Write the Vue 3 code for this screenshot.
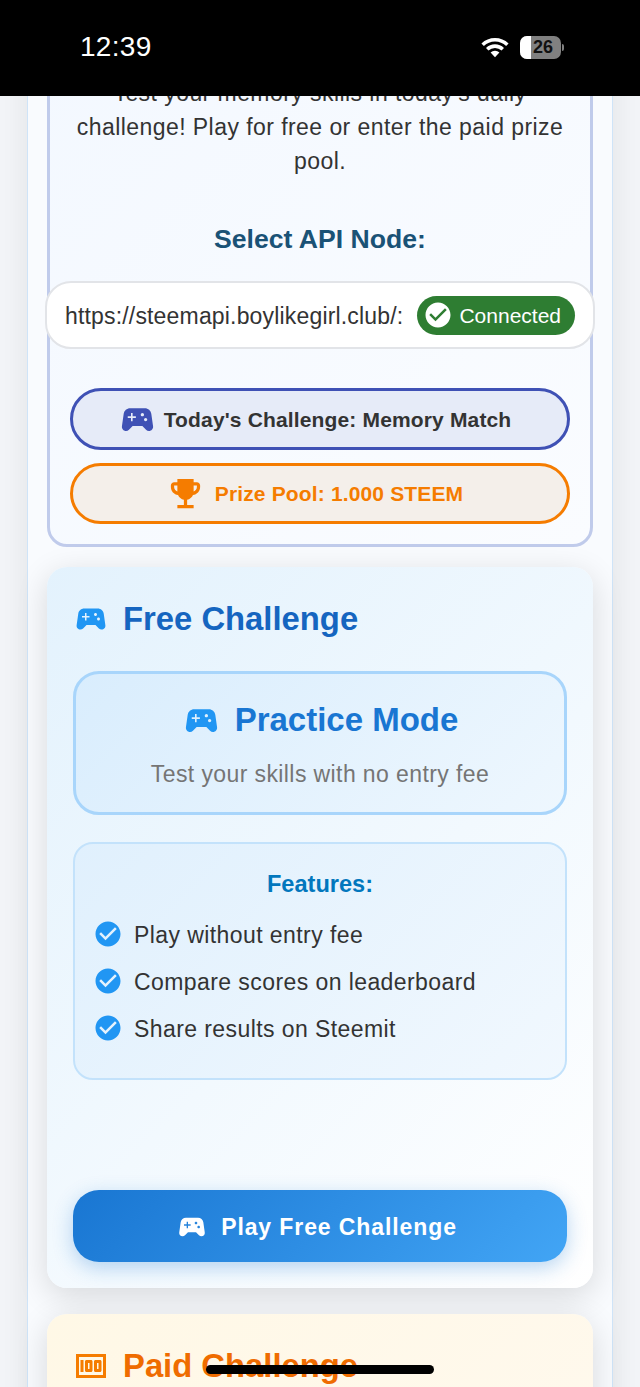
<template>
  <div class="phone">
    <div class="status-bar">
      <span class="time">12:39</span>
      <div class="status-icons">
        <svg class="wifi" viewBox="0 0 34 26">
          <path d="M3 10.5a20 20 0 0 1 28 0" />
          <path d="M8.2 15.6a12.6 12.6 0 0 1 17.6 0" />
          <path d="M17 24.5l-5-5.2a7 7 0 0 1 10 0z" class="wifi-dot" />
        </svg>
        <div class="battery">
          <div class="battery-fill"></div>
          <span>26</span>
        </div>
        <div class="battery-tip"></div>
      </div>
    </div>

    <div class="shell">
      <section class="intro">
        <p class="intro-text">Test your memory skills in today's daily challenge! Play for free or enter the paid prize pool.</p>
        <h3 class="node-title">Select API Node:</h3>
        <div class="node-select">
          <span class="node-url">https://steemapi.boylikegirl.club/:</span>
          <span class="node-status">
            <svg viewBox="0 0 24 24"><path :d="checkPath" /></svg>
            <span class="node-label">Connected</span>
          </span>
        </div>
        <div class="chip chip-blue">
          <svg viewBox="0 0 24 24"><path :d="padPath" /></svg>
          <span>Today's Challenge: Memory Match</span>
        </div>
        <div class="chip chip-orange">
          <svg viewBox="0 0 24 24"><path :d="trophyPath" /></svg>
          <span>Prize Pool: 1.000 STEEM</span>
        </div>
      </section>

      <section class="card card-free">
        <h2 class="card-title">
          <svg viewBox="0 0 24 24"><path :d="padPath" /></svg>
          Free Challenge
        </h2>
        <div class="mode">
          <h3>
            <svg viewBox="0 0 24 24"><path :d="padPath" /></svg>
            Practice Mode
          </h3>
          <p>Test your skills with no entry fee</p>
        </div>
        <div class="features">
          <h4>Features:</h4>
          <ul>
            <li v-for="item in features" :key="item">
              <svg viewBox="0 0 24 24"><path :d="checkPath" /></svg>
              {{ item }}
            </li>
          </ul>
        </div>
        <button class="play">
          <svg viewBox="0 0 24 24"><path :d="padPath" /></svg>
          Play Free Challenge
        </button>
      </section>

      <section class="card card-paid">
        <h2 class="card-title">
          <svg viewBox="0 0 24 24"><path :d="moneyPath" /></svg>
          Paid Challenge
        </h2>
      </section>
    </div>

    <div class="home-bar"></div>
  </div>
</template>

<script setup>
const features = ['Play without entry fee', 'Compare scores on leaderboard', 'Share results on Steemit']

const padPath = 'M21.58 16.09l-1.09-7.66C20.21 6.46 18.52 5 16.53 5H7.47C5.48 5 3.79 6.46 3.51 8.43l-1.09 7.66C2.2 17.63 3.39 19 4.94 19c.68 0 1.32-.27 1.8-.75L9 16h6l2.25 2.25c.48.48 1.13.75 1.8.75 1.56 0 2.75-1.37 2.53-2.91zM11 11H9v2H8v-2H6v-1h2V8h1v2h2v1zm4-1c-.55 0-1-.45-1-1s.45-1 1-1 1 .45 1 1-.45 1-1 1zm2 3c-.55 0-1-.45-1-1s.45-1 1-1 1 .45 1 1-.45 1-1 1z'
const checkPath = 'M12 2C6.48 2 2 6.48 2 12s4.48 10 10 10 10-4.48 10-10S17.52 2 12 2zm-2 15l-5-5 1.41-1.41L10 14.17l7.59-7.59L19 8l-9 9z'
const trophyPath = 'M19 5h-2V3H7v2H5c-1.1 0-2 .9-2 2v1c0 2.55 1.92 4.63 4.39 4.94.63 1.5 1.98 2.63 3.61 2.96V19H7v2h10v-2h-4v-3.1c1.63-.33 2.98-1.46 3.61-2.96C19.08 12.63 21 10.55 21 8V7c0-1.1-.9-2-2-2zM5 8V7h2v3.82C5.84 10.4 5 9.3 5 8zm14 0c0 1.3-.84 2.4-2 2.82V7h2v1z'
const moneyPath = 'M5 8h2v8H5zm7 0H9c-.55 0-1 .45-1 1v6c0 .55.45 1 1 1h3c.55 0 1-.45 1-1V9c0-.55-.45-1-1-1zm-1 6h-1v-4h1v4zm7-6h-3c-.55 0-1 .45-1 1v6c0 .55.45 1 1 1h3c.55 0 1-.45 1-1V9c0-.55-.45-1-1-1zm-1 6h-1v-4h1v4zM2 4v16h20V4H2zm2 14V6h16v12H4z'
</script>

<style scoped>
.phone {
  position: relative;
  width: 640px;
  height: 1387px;
  overflow: hidden;
  background: #f3f5f8;
  font-family: "Liberation Sans", Arial, sans-serif;
  color: #333;
}

.status-bar {
  position: absolute;
  top: 0;
  left: 0;
  right: 0;
  z-index: 5;
  height: 96px;
  background: #000;
  display: flex;
  justify-content: space-between;
  align-items: center;
  padding: 0 76px 2px 80px;
  box-sizing: border-box;
}

.time {
  color: #fff;
  font-size: 28px;
  font-weight: 500;
  letter-spacing: 0.3px;
}

.status-icons {
  display: flex;
  align-items: center;
}

.wifi {
  width: 30px;
  height: 24px;
  margin-right: 10px;
}

.wifi path {
  fill: none;
  stroke: #fff;
  stroke-width: 4px;
}

.wifi .wifi-dot {
  fill: #fff;
  stroke: none;
}

.battery {
  position: relative;
  width: 41px;
  height: 23px;
  border-radius: 7px;
  background: #808080;
  overflow: hidden;
  display: flex;
  align-items: center;
  justify-content: center;
  padding-left: 5px;
  box-sizing: border-box;
}

.battery-fill {
  position: absolute;
  left: 0;
  top: 0;
  bottom: 0;
  width: 11px;
  background: #fff;
}

.battery span {
  position: relative;
  color: #111;
  font-size: 18px;
  font-weight: 700;
}

.battery-tip {
  width: 2px;
  height: 7px;
  margin-left: 1px;
  background: #808080;
  border-radius: 0 2px 2px 0;
}

.shell {
  width: 586px;
  margin: -24px 0 0 27px;
  padding: 20px 19px 60px;
  box-sizing: border-box;
  background: #f9fbfe;
  border: 1px solid #cfe4f8;
  box-shadow: 0 0 32px rgba(0, 0, 0, 0.08);
  min-height: 1500px;
}

.intro {
  padding: 76px 20px 20px;
  border: 3px solid #c0cbeb;
  border-radius: 20px;
  background: linear-gradient(135deg, #f3f8ff, #fafcff);
  text-align: center;
}

.intro-text {
  margin: 0;
  font-size: 23px;
  line-height: 34px;
  letter-spacing: 0.44px;
  color: #333;
}

.node-title {
  margin: 44px 0 0;
  font-size: 26.6px;
  line-height: 34px;
  font-weight: 700;
  color: #1a5276;
}

.node-select {
  display: flex;
  align-items: center;
  justify-content: space-between;
  margin: 25px -25px 39px;
  height: 68px;
  padding: 0 18px;
  box-sizing: border-box;
  background: #fff;
  border: 2px solid #e2e4e8;
  border-radius: 26px;
}

.node-url {
  padding-top: 2px;
  font-size: 23px;
  white-space: nowrap;
  letter-spacing: 0.17px;
}

.node-status {
  display: flex;
  align-items: center;
  gap: 6px;
  height: 39px;
  padding: 0 14px 0 6px;
  border-radius: 20px;
  background: #2e7d32;
  color: #fff;
  font-size: 21px;
  white-space: nowrap;
}

.node-label {
  padding-top: 2px;
}

.node-status svg {
  width: 30px;
  height: 30px;
  fill: #fff;
}

.chip {
  display: flex;
  align-items: center;
  justify-content: center;
  height: 62px;
  padding-right: 11px;
  border-radius: 31px;
  box-sizing: border-box;
  font-size: 21px;
  font-weight: 700;
  letter-spacing: 0.15px;
}

.chip svg {
  width: 39px;
  height: 39px;
  flex-shrink: 0;
}

.chip-blue {
  gap: 7px;
  border: 3px solid #3f51b5;
  background: #e6ebf8;
  color: #333;
  margin-bottom: 13px;
}

.chip-blue span {
  padding-top: 2px;
}

.chip-blue svg {
  fill: #3f51b5;
}

.chip-orange {
  gap: 10px;
  height: 61px;
  border: 3px solid #f57c00;
  background: #f4efea;
  color: #f57c00;
}

.chip-orange svg {
  fill: #f57c00;
}

.card {
  margin-top: 20px;
  border-radius: 20px;
  padding: 26px 26px 26px;
  box-shadow: 0 8px 32px rgba(0, 0, 0, 0.14);
}

.card-free {
  background: linear-gradient(135deg, #e3f2fd, #ffffff);
}

.card-paid {
  margin-top: 26px;
  background: linear-gradient(135deg, #fff8e6, #fff9ef);
  height: 300px;
}

.card-title {
  display: flex;
  align-items: center;
  gap: 14px;
  margin: 0;
  height: 52px;
  font-size: 32.8px;
  font-weight: 700;
}

.card-title svg {
  width: 36px;
  height: 36px;
}

.card-free .card-title {
  color: #1565c0;
}

.card-free .card-title svg {
  fill: #2196f3;
}

.card-paid .card-title {
  color: #ef6c00;
}

.card-paid .card-title svg {
  fill: #f57c00;
}

.mode {
  margin-top: 26px;
  height: 144px;
  box-sizing: border-box;
  border: 3px solid #a8d5fb;
  border-radius: 26px;
  background: linear-gradient(135deg, #d9edfd, #eef7fe);
  text-align: center;
  padding-top: 26px;
}

.mode h3 {
  display: flex;
  align-items: center;
  justify-content: center;
  gap: 14px;
  margin: 0;
  height: 40px;
  font-size: 33px;
  font-weight: 700;
  color: #1976d2;
}

.mode h3 svg {
  width: 39px;
  height: 39px;
  fill: #2196f3;
}

.mode p {
  margin: 17px 0 0;
  font-size: 23px;
  line-height: 34px;
  color: #757575;
  letter-spacing: 0.4px;
}

.features {
  margin-top: 27px;
  height: 238px;
  box-sizing: border-box;
  border: 2px solid #c3e2fb;
  border-radius: 20px;
  background: linear-gradient(135deg, #e0f0fd, #f1f8fe);
  padding: 23px 18px 0;
}

.features h4 {
  margin: 0 0 11px;
  font-size: 23.6px;
  line-height: 34px;
  font-weight: 700;
  text-align: center;
  color: #0277bd;
}

.features ul {
  list-style: none;
  margin: 0;
  padding: 0;
}

.features li {
  display: flex;
  align-items: center;
  gap: 11px;
  height: 47px;
  font-size: 23px;
  letter-spacing: 0.42px;
  color: #333;
}

.features li svg {
  width: 30px;
  height: 30px;
  margin-top: -3px;
  fill: #2196f3;
}

.play {
  display: flex;
  align-items: center;
  justify-content: center;
  gap: 13px;
  width: 100%;
  height: 72px;
  margin-top: 110px;
  padding: 2px 7px 0 0;
  border: 0;
  border-radius: 26px;
  background: linear-gradient(135deg, #1976d2, #42a5f5);
  box-shadow: 0 6px 20px rgba(25, 118, 210, 0.3);
  color: #fff;
  font-family: inherit;
  font-size: 23px;
  font-weight: 700;
  letter-spacing: 0.9px;
}

.play svg {
  width: 32px;
  height: 32px;
  fill: #fff;
}

.home-bar {
  position: absolute;
  left: 206px;
  bottom: 13px;
  width: 228px;
  height: 9px;
  background: #000;
  border-radius: 5px;
  z-index: 5;
}
</style>
